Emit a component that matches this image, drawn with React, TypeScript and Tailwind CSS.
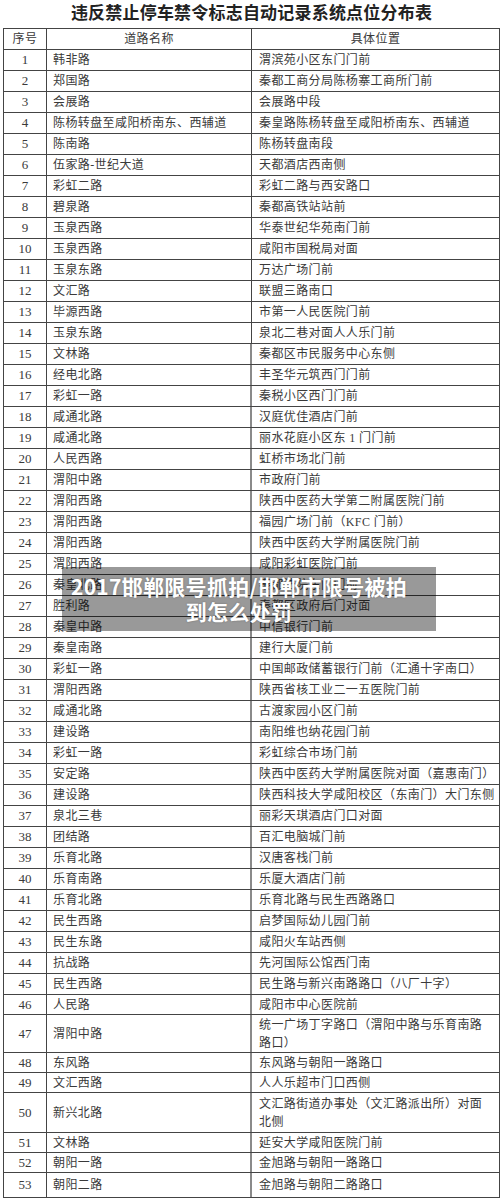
import React from "react";

type Row = { n: number; road: string; loc: string[]; h: string };

const data: [string, string | string[]][] = [
  ["韩非路", "渭滨苑小区东门门前"],
  ["郑国路", "秦都工商分局陈杨寨工商所门前"],
  ["会展路", "会展路中段"],
  ["陈杨转盘至咸阳桥南东、西辅道", "秦皇路陈杨转盘至咸阳桥南东、西辅道"],
  ["陈南路", "陈杨转盘南段"],
  ["伍家路-世纪大道", "天都酒店西南侧"],
  ["彩虹二路", "彩虹二路与西安路口"],
  ["碧泉路", "秦都高铁站站前"],
  ["玉泉西路", "华泰世纪华苑南门前"],
  ["玉泉西路", "咸阳市国税局对面"],
  ["玉泉东路", "万达广场门前"],
  ["文汇路", "联盟三路南口"],
  ["毕源西路", "市第一人民医院门前"],
  ["玉泉东路", "泉北二巷对面人人乐门前"],
  ["文林路", "秦都区市民服务中心东侧"],
  ["经电北路", "丰圣华元筑西门门前"],
  ["彩虹一路", "秦税小区西门门前"],
  ["咸通北路", "汉庭优佳酒店门前"],
  ["咸通北路", "丽水花庭小区东 1 门门前"],
  ["人民西路", "虹桥市场北门前"],
  ["渭阳中路", "市政府门前"],
  ["渭阳西路", "陕西中医药大学第二附属医院门前"],
  ["渭阳西路", "福园广场门前（KFC 门前）"],
  ["渭阳西路", "陕西中医药大学附属医院门前"],
  ["渭阳西路", "咸阳彩虹医院门前"],
  ["秦皇北路", "秦都法院东门门前"],
  ["胜利路", "秦都区政府后门对面"],
  ["秦皇中路", "中信银行门前"],
  ["秦皇南路", "建行大厦门前"],
  ["彩虹一路", "中国邮政储蓄银行门前（汇通十字南口）"],
  ["渭阳西路", "陕西省核工业二一五医院门前"],
  ["咸通北路", "古渡家园小区门前"],
  ["建设路", "南阳维也纳花园门前"],
  ["彩虹一路", "彩虹综合市场门前"],
  ["安定路", "陕西中医药大学附属医院对面（嘉惠南门）"],
  ["建设路", "陕西科技大学咸阳校区（东南门）大门东侧"],
  ["泉北三巷", "丽彩天琪酒店门口对面"],
  ["团结路", "百汇电脑城门前"],
  ["乐育北路", "汉唐客栈门前"],
  ["乐育南路", "乐厦大酒店门前"],
  ["乐育北路", "乐育北路与民生西路路口"],
  ["民生西路", "启梦国际幼儿园门前"],
  ["民生东路", "咸阳火车站西侧"],
  ["抗战路", "先河国际公馆西门南"],
  ["民生西路", "民生路与新兴南路路口（八厂十字）"],
  ["人民路", "咸阳市中心医院前"],
  ["渭阳中路", ["统一广场丁字路口（渭阳中路与乐育南路", "路口）"]],
  ["东风路", "东风路与朝阳一路路口"],
  ["文汇西路", "人人乐超市门口西侧"],
  ["新兴北路", ["文汇路街道办事处（文汇路派出所）对面", "北侧"]],
  ["文林路", "延安大学咸阳医院门前"],
  ["朝阳一路", "金旭路与朝阳一路路口"],
  ["朝阳二路", "金旭路与朝阳二路路口"],
];

const heights: Record<number, string> = {
  46: "h-[20px]",
  47: "h-[38px]",
  48: "h-[20px]",
  49: "h-[20px]",
  50: "h-[40px]",
  51: "h-[20px]",
  52: "h-[20px]",
  53: "h-[24px]",
};

const rows: Row[] = data.map(([road, loc], i) => ({
  n: i + 1,
  road,
  loc: Array.isArray(loc) ? loc : [loc],
  h: heights[i + 1] ?? "h-[21px]",
}));

const font = { fontFamily: '"Liberation Serif", "Noto Sans CJK SC", serif' };

export default function App() {
  return (
    <div className="relative w-[500px] h-[1199px] bg-white overflow-hidden" style={font}>
      <div className="h-[28px] w-[497px] ml-[3px] flex justify-center items-start pt-[1px]">
        <div
          className="text-[17px] leading-[21px] font-bold text-[#222] tracking-[0.2px]"
          style={{ fontFamily: '"Noto Sans CJK SC", sans-serif' }}
        >
          违反禁止停车禁令标志自动记录系统点位分布表
        </div>
      </div>
      <div className="ml-[3px] w-[497px] border border-[#444] text-[#3a3a3a] text-[12px] tracking-[0.4px]">
        <div className="flex h-[21px] border-b border-[#444]">
          <div className="w-[43px] shrink-0 border-r border-[#444] flex items-center justify-center">序号</div>
          <div className="w-[205px] shrink-0 border-r border-[#444] flex items-center justify-center">道路名称</div>
          <div className="flex-1 flex items-center justify-center">具体位置</div>
        </div>
        {rows.map((r) => (
          <div
            key={r.n}
            className={`flex ${r.h} ${r.n < 53 ? "border-b border-[#444]" : ""}`}
          >
            <div className="w-[43px] shrink-0 border-r border-[#444] flex items-center justify-center text-[13px] tracking-normal">
              {r.n}
            </div>
            <div
              className={`w-[205px] shrink-0 flex items-center pl-[6px] whitespace-nowrap ${
                r.n >= 15 ? "border-r-2 border-[#8a8a8a]" : "border-r border-[#444]"
              }`}
            >
              {r.road}
            </div>
            <div className="flex-1 flex flex-col justify-center pl-[7px] whitespace-nowrap leading-[18px]">
              {r.loc.map((l, k) => (
                <span key={k}>{l}</span>
              ))}
            </div>
          </div>
        ))}
      </div>
      <div className="absolute left-[62px] top-[567px] w-[374px] h-[64px] bg-[rgba(0,0,0,0.4)] pt-[7px] pr-[20px]">
        <div
          className="text-center text-white font-bold text-[21px] leading-[25px] tracking-[0.3px] whitespace-nowrap"
          style={{ fontFamily: '"Noto Sans CJK SC", sans-serif', textShadow: "0 0 2px rgba(0,0,0,0.3)" }}
        >
          2017邯郸限号抓拍/邯郸市限号被拍
          <br />
          到怎么处罚
        </div>
      </div>
    </div>
  );
}
